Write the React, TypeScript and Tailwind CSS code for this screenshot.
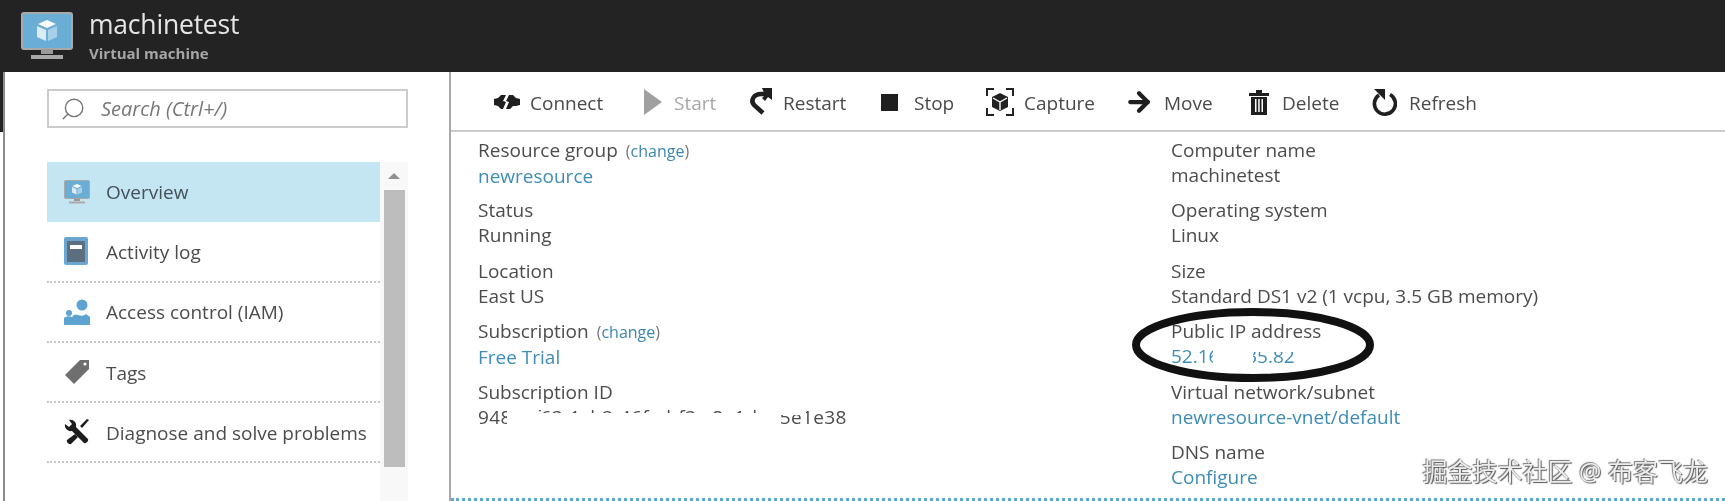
import { ArrowRight, Search } from "lucide-react";
import type { ReactNode } from "react";

function Monitor({ small }: { small?: boolean }) {
  return (
    <svg viewBox="0 0 52 48" className={small ? "w-[26px] h-[24px]" : "w-[52px] h-[48px]"}>
      <rect x="1" y="1" width="50" height="36" rx="2" fill="#6aaed6" stroke="#a9a9a9" strokeWidth="2" />
      <path d="M20 37h12v5H20z" fill="#9a9a9a" />
      <path d="M10 43h32v4H10z" fill="#a9a9a9" />
      <path d="M26 8l9 4-9 4-9-4z" fill="#ffffff" />
      <path d="M16 14l9 4v11l-9-4z" fill="#dcecf6" />
      <path d="M27 18l9-4v11l-9 4z" fill="#a8d0e8" />
    </svg>
  );
}

function ActivityIcon() {
  return (
    <svg viewBox="0 0 24 28" className="w-[24px] h-[28px]">
      <rect x="0" y="0" width="24" height="28" rx="2" fill="#6aa6cf" />
      <rect x="3" y="4" width="18" height="21" fill="#5c6f80" />
      <rect x="6" y="8" width="12" height="4" fill="#ffffff" />
    </svg>
  );
}

function AccessIcon() {
  return (
    <svg viewBox="0 0 26 26" className="w-[26px] h-[26px]">
      <circle cx="18" cy="6" r="5.5" fill="#5fa3d0" />
      <circle cx="5" cy="14" r="3" fill="#5fa3d0" />
      <path d="M0 26v-7c2-2 6-2 8-1 2-3 4-3 6-2 3 1 6 1 8-1l4 3v8z" fill="#5fa3d0" />
    </svg>
  );
}

function TagIcon() {
  return (
    <svg viewBox="0 0 26 26" className="w-[26px] h-[26px]">
      <path d="M16 1h9v9L10 25 1 16z" fill="#6f6f6f" />
      <circle cx="21" cy="5" r="1.6" fill="#ffffff" />
    </svg>
  );
}

function ToolsIcon() {
  return (
    <svg viewBox="0 0 26 26" className="w-[26px] h-[26px]" fill="#1c1c1c">
      <path d="M1 5l4 3 3-3-3-4c4-1 8 2 7 7l12 12c1 2-2 5-4 4L8 12C4 13 0 9 1 5z" />
      <path d="M25 1l-7 8-2-2 7-7zM11 15l3 3-7 7c-2 1-5-2-4-4z" />
    </svg>
  );
}

function ConnectIcon() {
  return (
    <svg viewBox="0 0 26 16" className="w-[26px] h-[16px]" fill="#1f1f1f">
      <path d="M0 5l4-1 3-3h5l-3 6 3 1-3 7H7L4 12l-4-1z" />
      <path d="M26 5l-4-1-3-3h-4l-3 6 3 1-3 7h4l3-3h3l4-1z" />
    </svg>
  );
}

function StartIcon() {
  return (
    <svg viewBox="0 0 18 26" className="w-[18px] h-[26px]">
      <path d="M0 0l18 13L0 26z" fill="#a0a0a0" />
    </svg>
  );
}

function RestartIcon() {
  return (
    <svg viewBox="0 0 24 28" className="w-[24px] h-[28px]" fill="none">
      <path d="M15 25L6 17C2 12 6 6 13 6h4" stroke="#1f1f1f" strokeWidth="4.5" />
      <path d="M14 0h10v12l-4-3-3 4-3-3 3-3z" fill="#1f1f1f" />
    </svg>
  );
}

function CaptureIcon() {
  return (
    <svg viewBox="0 0 28 28" className="w-[28px] h-[28px]" fill="none">
      <path d="M8 1H1v7M20 1h7v7M8 27H1v-7M20 27h7v-7" stroke="#222222" strokeWidth="2" />
      <path d="M14 5l8 4v10l-8 4-8-4V9z" fill="#222222" />
      <path d="M7 10l7 4 7-4M14 14v8" stroke="#ffffff" strokeWidth="1.4" />
    </svg>
  );
}

function DeleteIcon() {
  return (
    <svg viewBox="0 0 20 26" className="w-[20px] h-[26px]" fill="#1f1f1f">
      <path d="M0 4h20v3H0zM7 1h6v3H7z" />
      <path d="M2 8h16v18H2z" />
      <path d="M6 10h1.5v13H6zM9.2 10h1.5v13H9.2zM12.5 10H14v13h-1.5z" fill="#ffffff" />
    </svg>
  );
}

function RefreshIcon() {
  return (
    <svg viewBox="0 0 26 28" className="w-[26px] h-[28px]" fill="none">
      <path d="M19 6.5a10.5 10.5 0 1 1-11 .5" stroke="#1f1f1f" strokeWidth="3.6" />
      <path d="M3 1h11v11z" fill="#1f1f1f" />
    </svg>
  );
}

function ToolItem({ icon, label, width, iconBox, muted }: { icon: ReactNode; label: string; width: string; iconBox: string; muted?: boolean }) {
  return (
    <div className={`flex items-center shrink-0 ${width}`}>
      <div className={`flex items-center shrink-0 ${iconBox}`}>{icon}</div>
      <span className={`text-[19px] pt-[2px] ${muted ? "text-[#a8a8a8]" : "text-[#4a4a4a]"}`}>{label}</span>
    </div>
  );
}

function MenuRow({ icon, label, active }: { icon: ReactNode; label: string; active?: boolean }) {
  return (
    <div className={`h-[60.3px] flex items-center pl-[17px] ${active ? "bg-[#c4e6f2]" : "border-b-2 border-dotted border-[#c8c8c8]"}`}>
      <div className="w-[42px] shrink-0 flex items-center">{icon}</div>
      <span className={`text-[19px] ${active ? "text-[#44505a]" : "text-[#4c4c4c] pt-[2px]"}`}>{label}</span>
    </div>
  );
}

function Change() {
  return (
    <span className="text-[16px] text-[#777777] ml-[8px]">
      (<span className="text-[#3d87ad]">change</span>)
    </span>
  );
}

function Field({ label, change, value, link }: { label: string; change?: boolean; value: ReactNode; link?: boolean }) {
  return (
    <div className="h-[60.4px] text-[19px] leading-[25px]">
      <div className="text-[#4c4c4c]">
        {label}
        {change && <Change />}
      </div>
      <div className={link ? "text-[#3d8db5]" : "text-[#4c4c4c]"}>{value}</div>
    </div>
  );
}

export default function App() {
  return (
    <div className="relative w-[1725px] h-[501px] overflow-hidden bg-white blur-[0.6px] font-['Open_Sans','Noto_Sans_CJK_SC',sans-serif]">
      <header className="h-[72px] bg-[#232323] flex items-center pl-[21px]">
        <div className="w-[68px] shrink-0">
          <Monitor />
        </div>
        <div>
          <div className="text-[26.5px] leading-[29px] pb-[5px] tracking-[-0.2px] text-[#e6e6e6]">machinetest</div>
          <div className="text-[15px] leading-[18px] font-bold text-[#a6a6a6]">Virtual machine</div>
        </div>
      </header>

      <div className="flex h-[429px]">
        <div className="w-[5px] shrink-0 border-r-2 border-[#8c8c8c]">
          <div className="h-[60px] -ml-[1px] bg-[#232323]" />
        </div>

        <aside className="w-[446px] shrink-0 border-r-2 border-[#a8a8a8] pl-[42px]">
          <div className="mt-[17px] w-[361px] h-[39px] border-2 border-[#cccccc] flex items-center pl-[11px]">
            <Search size={26} strokeWidth={1.3} className="-scale-x-100 text-[#777777] shrink-0" />
            <span className="ml-[15px] text-[20px] italic text-[#777777]">Search (Ctrl+/)</span>
          </div>
          <div className="mt-[34px] flex w-[361px] h-[339px]">
            <div className="w-[333px] shrink-0">
              <MenuRow active icon={<Monitor small />} label="Overview" />
              <MenuRow icon={<ActivityIcon />} label="Activity log" />
              <MenuRow icon={<AccessIcon />} label="Access control (IAM)" />
              <MenuRow icon={<TagIcon />} label="Tags" />
              <MenuRow icon={<ToolsIcon />} label="Diagnose and solve problems" />
            </div>
            <div className="w-[28px] shrink-0 bg-[#f8f8f8] flex flex-col items-center">
              <div className="h-[28px] flex items-center">
                <div className="w-0 h-0 border-x-[6px] border-x-transparent border-b-[6px] border-b-[#8f8f8f]" />
              </div>
              <div className="w-[21px] h-[277px] bg-[#bdbdbd]" />
            </div>
          </div>
        </aside>

        <main className="flex-1 min-w-0 border-b-[3px] border-dotted border-[#5aa9cf]">
          <div className="h-[60px] border-b-2 border-[#cccccc] flex items-center pl-[43px] pt-[2px]">
            <ToolItem icon={<ConnectIcon />} label="Connect" width="w-[150px]" iconBox="w-[36px]" />
            <ToolItem muted icon={<StartIcon />} label="Start" width="w-[104px]" iconBox="w-[30px]" />
            <ToolItem icon={<RestartIcon />} label="Restart" width="w-[133px]" iconBox="w-[35px]" />
            <ToolItem icon={<div className="w-[17px] h-[17px] bg-[#1f1f1f]" />} label="Stop" width="w-[105px]" iconBox="w-[33px]" />
            <ToolItem icon={<CaptureIcon />} label="Capture" width="w-[138px]" iconBox="w-[38px]" />
            <ToolItem icon={<ArrowRight size={30} strokeWidth={3.4} className="text-[#1f1f1f]" />} label="Move" width="w-[125px]" iconBox="w-[40px]" />
            <ToolItem icon={<DeleteIcon />} label="Delete" width="w-[122px]" iconBox="w-[33px]" />
            <ToolItem icon={<RefreshIcon />} label="Refresh" width="w-[100px]" iconBox="w-[38px]" />
          </div>

          <div className="flex pl-[27px] pt-[6px]">
            <div className="w-[693px] shrink-0">
              <Field label="Resource group" change value="newresource" link />
              <Field label="Status" value="Running" />
              <Field label="Location" value="East US" />
              <Field label="Subscription" change value="Free Trial" link />
              <Field
                label="Subscription ID"
                value={
                  <span className="relative inline-block tracking-[0.35px]">
                    948e0f63-1cb2-46fa-bf3c-8a1d4e5e1e38
                    <span className="absolute left-[29px] top-0 w-[32px] h-[25px] bg-white" />
                    <span className="absolute left-[61px] top-[8px] w-[218px] h-[17px] bg-white" />
                    <span className="absolute left-[279px] top-0 w-[22px] h-[25px] bg-white" />
                    <span className="absolute left-[301px] top-0 w-[27px] h-[10px] bg-white" />
                  </span>
                }
              />
            </div>
            <div className="flex-1">
              <Field label="Computer name" value="machinetest" />
              <Field label="Operating system" value="Linux" />
              <Field label="Size" value="Standard DS1 v2 (1 vcpu, 3.5 GB memory)" />
              <Field
                label="Public IP address"
                link
                value={
                  <span className="relative inline-block">
                    52.168.135.82
                    <span className="absolute left-[42px] top-0 w-[40px] h-[25px] bg-white" />
                    <span className="absolute left-[82px] top-0 w-[40px] h-[8px] bg-white" />
                  </span>
                }
              />
              <Field label="Virtual network/subnet" value="newresource-vnet/default" link />
              <Field label="DNS name" value="Configure" link />
            </div>
          </div>
        </main>
      </div>

      <svg viewBox="0 0 250 84" className="absolute left-[1129px] top-[303px] w-[250px] h-[84px]" fill="none">
        <ellipse cx="124" cy="42" rx="117" ry="33" stroke="#111111" strokeWidth="8" />
      </svg>

      <div className="absolute right-[17px] top-[454px] text-[25px] leading-[34px] text-[#ececec] [text-shadow:1px_1px_1px_#555555,-1px_-1px_1px_#777777]">
        掘金技术社区 @ 布客飞龙
      </div>
    </div>
  );
}
